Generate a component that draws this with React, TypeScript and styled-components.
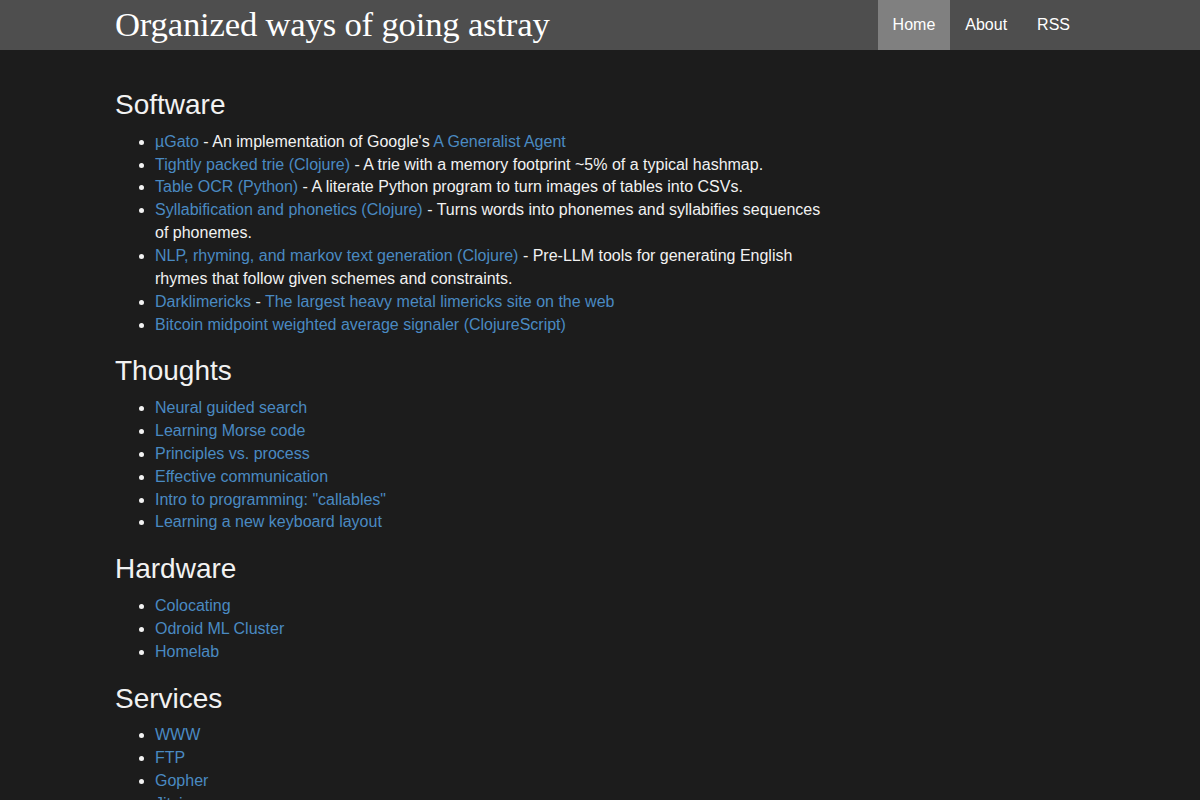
import React from "react";
import styled, { createGlobalStyle } from "styled-components";

const GlobalStyle = createGlobalStyle`
  html, body {
    margin: 0;
    padding: 0;
    background: #1c1c1c;
    color: #f2f2f2;
    font-family: "Liberation Sans", Arial, sans-serif;
    font-size: 16px;
    line-height: 1.42857;
  }
`;

const Header = styled.header`
  background: #4e4e4e;
  height: 50px;
`;

const HeaderInner = styled.div`
  width: 970px;
  margin: 0 auto;
  display: flex;
  align-items: stretch;
  justify-content: space-between;
  height: 50px;
`;

const Brand = styled.a`
  font-family: "Liberation Serif", "Times New Roman", serif;
  font-size: 34.7px;
  line-height: 50px;
  color: #ffffff;
  text-decoration: none;
  letter-spacing: -0.2px;
`;

const Nav = styled.nav`
  display: flex;
`;

const NavLink = styled.a<{ $active?: boolean }>`
  display: flex;
  align-items: center;
  padding: 0 15px;
  color: #ffffff;
  text-decoration: none;
  background: ${(p) => (p.$active ? "#808080" : "transparent")};
`;

const Main = styled.main`
  width: 970px;
  margin: 0 auto;
  padding-top: 20px;
`;

const Column = styled.div`
  max-width: 720px;
`;

const Heading = styled.h2`
  font-size: 28px;
  font-weight: 400;
  line-height: 1.1;
  margin: 20px 0 10px;
`;

const List = styled.ul`
  margin: 0 0 10px;
  padding-left: 40px;
`;

const Link = styled.a`
  color: #4a8ac2;
  text-decoration: none;
`;

const software: React.ReactNode[] = [
  <>
    <Link href="#">µGato</Link> - An implementation of Google's{" "}
    <Link href="#">A Generalist Agent</Link>
  </>,
  <>
    <Link href="#">Tightly packed trie (Clojure)</Link> - A trie with a memory
    footprint ~5% of a typical hashmap.
  </>,
  <>
    <Link href="#">Table OCR (Python)</Link> - A literate Python program to turn
    images of tables into CSVs.
  </>,
  <>
    <Link href="#">Syllabification and phonetics (Clojure)</Link> - Turns words
    into phonemes and syllabifies sequences of phonemes.
  </>,
  <>
    <Link href="#">NLP, rhyming, and markov text generation (Clojure)</Link> -
    Pre-LLM tools for generating English rhymes that follow given schemes and
    constraints.
  </>,
  <>
    <Link href="#">Darklimericks</Link> -{" "}
    <Link href="#">The largest heavy metal limericks site on the web</Link>
  </>,
  <>
    <Link href="#">Bitcoin midpoint weighted average signaler (ClojureScript)</Link>
  </>,
];

const sections: { title: string; links: string[] }[] = [
  {
    title: "Thoughts",
    links: [
      "Neural guided search",
      "Learning Morse code",
      "Principles vs. process",
      "Effective communication",
      'Intro to programming: "callables"',
      "Learning a new keyboard layout",
    ],
  },
  {
    title: "Hardware",
    links: ["Colocating", "Odroid ML Cluster", "Homelab"],
  },
  {
    title: "Services",
    links: ["WWW", "FTP", "Gopher", "Jitsi", "Email"],
  },
];

export default function App() {
  return (
    <>
      <GlobalStyle />
      <Header>
        <HeaderInner>
          <Brand href="#">Organized ways of going astray</Brand>
          <Nav>
            <NavLink href="#" $active>
              Home
            </NavLink>
            <NavLink href="#">About</NavLink>
            <NavLink href="#">RSS</NavLink>
          </Nav>
        </HeaderInner>
      </Header>
      <Main>
        <Column>
          <Heading>Software</Heading>
          <List>
            {software.map((item, i) => (
              <li key={i}>{item}</li>
            ))}
          </List>
          {sections.map((s) => (
            <React.Fragment key={s.title}>
              <Heading>{s.title}</Heading>
              <List>
                {s.links.map((l) => (
                  <li key={l}>
                    <Link href="#">{l}</Link>
                  </li>
                ))}
              </List>
            </React.Fragment>
          ))}
        </Column>
      </Main>
    </>
  );
}
